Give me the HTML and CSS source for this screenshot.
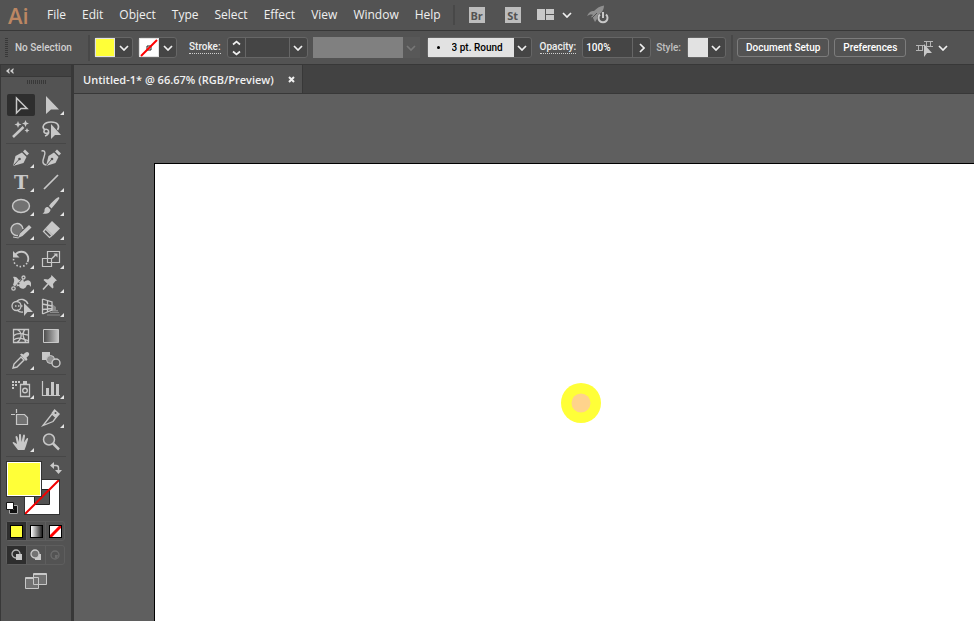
FILE: index.html
```html
<!DOCTYPE html>
<html lang="en">
<head>
  <meta charset="UTF-8" />
  <meta name="viewport" content="width=device-width, initial-scale=1.0"/>
  <title>Untitled-1* @ 66.67% (RGB/Preview)</title>
  <link rel="stylesheet" href="styles.css">
</head>
<body>

  <!-- shared symbols -->
  <svg class="defs" aria-hidden="true">
    <symbol id="chevron" viewBox="0 0 10 6"><path d="M1 1l4 4 4-4" fill="none" stroke="currentColor" stroke-width="1.700"/></symbol>
    <symbol id="more" viewBox="0 0 28 22"><path d="M27 17v4h-4z" fill="#e4e4e4"/></symbol>
    <linearGradient id="fade"><stop offset="0" stop-color="#4a4a4a"/><stop offset="1" stop-color="#c8c8c8"/></linearGradient>
  </svg>

  <header class="menubar">
    <span class="logo">Ai</span>
    <nav class="menu">
      <a href="#">File</a>
      <a href="#">Edit</a>
      <a href="#">Object</a>
      <a href="#">Type</a>
      <a href="#">Select</a>
      <a href="#">Effect</a>
      <a href="#">View</a>
      <a href="#">Window</a>
      <a href="#">Help</a>
    </nav>
    <div class="apps">
      <button class="app" aria-label="Bridge">Br</button>
      <button class="app" aria-label="Stock">St</button>
      <button class="arrange" aria-label="Arrange documents">
        <svg width="18" height="12" viewBox="0 0 18 12" fill="#c8c8c8"><path d="M0 0h8v11H0zM9 0h8v5H9zM9 6h8v5H9z"/></svg>
        <svg class="chev" width="10" height="6"><use href="#chevron"/></svg>
      </button>
      <button class="gpu" aria-label="GPU performance">
        <svg width="22" height="20" viewBox="0 0 22 20">
          <path d="M0 11C2 7 4 6 7 6c3-3 6-5 10-5.500 0 3-1 5-3 7.500-3 1-4 3-4 6l-2 3-2-4-2-1 2-2c-2-1-4 0-6 1z" fill="#8f8f8f"/>
          <path d="M5 13l5-5" stroke="#535353"/>
          <path d="M13 9.500a4.500 4.500 0 1 0 6 0M16 7v6" fill="none" stroke="#c8c8c8" stroke-width="2"/>
        </svg>
      </button>
    </div>
  </header>

  <section class="controlbar">
    <span class="grip-v"></span>
    <span class="status">No Selection</span>
    <span class="divider"></span>

    <button class="picker" aria-label="Fill">
      <span class="chip yellow"></span>
      <span class="drop"><svg width="10" height="6"><use href="#chevron"/></svg></span>
    </button>
    <button class="picker" aria-label="Stroke colour">
      <span class="chip none">
        <svg width="20" height="20" viewBox="0 0 20 20"><path d="M8 8h4v4H8z" fill="none" stroke="#222"/><path d="M2 18L18 2" stroke="#f00" stroke-width="2"/></svg>
      </span>
      <span class="drop"><svg width="10" height="6"><use href="#chevron"/></svg></span>
    </button>

    <div class="field stroke-field">
      <label class="dotted" for="weight">Stroke:</label>
      <div class="box">
        <button class="step" aria-label="Step stroke weight">
          <svg width="9" height="16" viewBox="0 0 9 16" fill="none" stroke="#f0f0f0" stroke-width="1.700"><path d="M1 4.500L4.500 1.500 8 4.500M1 11.500l3.500 3 3.500-3"/></svg>
        </button>
        <input type="text" id="weight">
        <button class="drop" aria-label="Stroke weights"><svg width="10" height="6"><use href="#chevron"/></svg></button>
      </div>
    </div>

    <div class="profile">
      <select aria-label="Width profile" disabled></select>
      <span class="drop"><svg width="10" height="6"><use href="#chevron"/></svg></span>
    </div>

    <div class="box brush">
      <span class="dot"></span>
      <select aria-label="Brush definition"><option>3 pt. Round</option></select>
      <span class="drop"><svg width="10" height="6"><use href="#chevron"/></svg></span>
    </div>

    <div class="field">
      <label class="dotted" for="opacity">Opacity:</label>
      <div class="box">
        <input type="text" id="opacity" value="100%">
        <button class="drop" aria-label="Opacity slider"><svg width="6" height="10" viewBox="0 0 6 10"><path d="M1 1l4 4-4 4" fill="none" stroke="currentColor" stroke-width="1.700"/></svg></button>
      </div>
    </div>

    <div class="field">
      <label class="muted" for="style">Style:</label>
      <button class="picker" id="style">
        <span class="chip light"></span>
        <span class="drop"><svg width="10" height="6"><use href="#chevron"/></svg></span>
      </button>
    </div>
    <span class="divider"></span>

    <div class="actions">
      <button class="action">Document Setup</button>
      <button class="action">Preferences</button>
    </div>
    <button class="similar" aria-label="Select similar objects">
      <svg width="18" height="18" viewBox="0 0 18 18">
        <path d="M2.500 6.500h4v5h-4zM10.500 2.500h4v5h-4zM0 6.500h9M0 11.500h7M8 2.500h9M8 7.500h9" fill="none" stroke="#b4b4b4"/>
        <path d="M8 5v13l3-4h5z" fill="#c8c8c8"/>
      </svg>
      <svg class="chev" width="10" height="6"><use href="#chevron"/></svg>
    </button>
  </section>

  <main class="workspace">
    <aside class="tools">
      <button class="collapse" aria-label="Collapse panel">
        <svg width="8" height="6" viewBox="0 0 8 6" fill="#d0d0d0"><path d="M3.500 0v2L2.500 3l1 1v2L0 3zM7.500 0v2l-1 1 1 1v2L4 3z"/></svg>
      </button>
      <div class="grip"><span></span></div>

      <div class="group">
        <button class="tool active" aria-label="Selection">
          <svg viewBox="0 0 28 22"><path d="M9.500 4v15l4.500-4.500h6z" fill="none" stroke="#c8c8c8" stroke-width="1.500"/></svg>
        </button>
        <button class="tool" aria-label="Direct selection">
          <svg viewBox="0 0 28 22"><path d="M9 2v18l5-4.500h8z" fill="#c8c8c8"/><use href="#more"/></svg>
        </button>
        <button class="tool" aria-label="Magic wand">
          <svg viewBox="0 0 28 22"><path d="M6 19L16.500 9" stroke="#c8c8c8" stroke-width="2.500"/><path d="M11 3l1 2.500L14.500 6.500 12 7.500 11 10 10 7.500 7.500 6.500 10 5.500zM18.500 2l1 2.500L22 5.500 19.500 6.500 18.500 9l-1-2.500L15 5.500l2.500-1zM20 10l.8 1.700 1.700.8-1.700.8-.8 1.700-.8-1.700-1.700-.8 1.700-.8z" fill="#c8c8c8"/></svg>
        </button>
        <button class="tool" aria-label="Lasso">
          <svg viewBox="0 0 28 22"><path d="M8 12C4 9 7 4 14 4s9 4 6.500 8M8 18c3-1 4-3 3.500-5s-4-2.500-4.500 0 3 3 5 1.500" fill="none" stroke="#c8c8c8" stroke-width="1.600"/><path d="M14 6v15l4-4h6z" fill="#c8c8c8"/></svg>
        </button>
      </div>

      <div class="group">
        <button class="tool" aria-label="Pen">
          <svg viewBox="0 0 28 22"><path d="M6 19L8.500 9 15 5.500 19.500 10 16.500 16z" fill="#c8c8c8"/><path d="M16 4.500L18 2.500l4 4-2 2z" fill="#c8c8c8"/><path d="M6.500 18.500l5.500-6" stroke="#535353"/><circle cx="12.500" cy="12" r="1.300" fill="#535353"/><use href="#more"/></svg>
        </button>
        <button class="tool" aria-label="Curvature">
          <svg viewBox="0 0 28 22"><path d="M9 19L11.500 9 17 5.500 21.500 10 18.500 16z" fill="#c8c8c8"/><path d="M18 4.500L20 2.500l4 4-2 2z" fill="#c8c8c8"/><path d="M9.500 18.500l5-6" stroke="#535353"/><circle cx="15" cy="12" r="1.300" fill="#535353"/><path d="M4.500 4c4-1 4 2 2.500 6s-2 7 2 8" fill="none" stroke="#c8c8c8" stroke-width="1.400"/></svg>
        </button>
        <button class="tool" aria-label="Type">
          <svg viewBox="0 0 28 22"><text class="glyph" x="14" y="18">T</text><use href="#more"/></svg>
        </button>
        <button class="tool" aria-label="Line segment">
          <svg viewBox="0 0 28 22"><path d="M7 18L21 4" stroke="#c8c8c8" stroke-width="1.700"/><use href="#more"/></svg>
        </button>
        <button class="tool" aria-label="Ellipse">
          <svg viewBox="0 0 28 22"><ellipse cx="14" cy="11" rx="8.500" ry="6.500" fill="#727272" stroke="#c8c8c8" stroke-width="1.400"/><use href="#more"/></svg>
        </button>
        <button class="tool" aria-label="Paintbrush">
          <svg viewBox="0 0 28 22"><path d="M22.500 3l-1-1C18 4 14 8 12 11l2.500 2.500C17.500 10 21 6 22.500 3zM11 12c-3 0-3.500 2-3.500 4 0 1-1 2-2 2.500 4 1 8-.5 8-4z" fill="#c8c8c8"/><use href="#more"/></svg>
        </button>
        <button class="tool" aria-label="Shaper">
          <svg viewBox="0 0 28 22"><path d="M11 16.500A6 6 0 1 1 16 10" fill="#727272" stroke="#c8c8c8" stroke-width="1.400"/><path d="M11 19l2-4.500L22 6l2.500 2.500-9 8.500z" fill="#c8c8c8"/><path d="M6 18l5.500 1" stroke="#c8c8c8"/><use href="#more"/></svg>
        </button>
        <button class="tool" aria-label="Eraser">
          <svg viewBox="0 0 28 22"><path d="M15 2l8 7.500-7 7L8.500 9z" fill="#c8c8c8"/><path d="M8.500 10L6.500 12.500l6 6 2.500-2z" fill="none" stroke="#c8c8c8" stroke-width="1.300"/><use href="#more"/></svg>
        </button>
      </div>

      <div class="group">
        <button class="tool" aria-label="Rotate">
          <svg viewBox="0 0 28 22"><path d="M8 7.500c3-5 10-5 12.500 0 1 2 1 4.500 0 6.500" fill="none" stroke="#c8c8c8" stroke-width="1.800"/><path d="M20 15a7.200 7.200 0 0 1-13.300-5" fill="none" stroke="#c8c8c8" stroke-width="1.600" stroke-dasharray="1.500 2"/><path d="M6 3v6.500h6.500z" fill="#c8c8c8"/><use href="#more"/></svg>
        </button>
        <button class="tool" aria-label="Scale">
          <svg viewBox="0 0 28 22"><path d="M10.500 3.500h12v11h-12zM5.500 10.500h9v8h-9z" fill="none" stroke="#c8c8c8" stroke-width="1.200"/><path d="M15 10.500l4-4" stroke="#c8c8c8" stroke-width="1.500"/><path d="M16.500 5.500h4v4z" fill="#c8c8c8"/><use href="#more"/></svg>
        </button>
        <button class="tool" aria-label="Width">
          <svg viewBox="0 0 28 22"><path d="M6 5c2-1 4 0 6 3l4-1 1 3c2-2 6-3 7 1v4c-2-3-4-3-5 0-2 3-6 2-7-1-2 0-4 1-6-1 1-3 2-5 0-8z" fill="#c8c8c8"/><path d="M7 16l9-10" stroke="#535353"/><circle cx="6.500" cy="16.500" r="1.700" fill="#535353" stroke="#c8c8c8" stroke-width="1.300"/><circle cx="11.500" cy="11.500" r="1.500" fill="#535353" stroke="#c8c8c8"/><circle cx="16.500" cy="5.500" r="1.500" fill="#535353" stroke="#c8c8c8" stroke-width="1.300"/><use href="#more"/></svg>
        </button>
        <button class="tool" aria-label="Puppet warp">
          <svg viewBox="0 0 28 22"><path d="M14.500 3l5.500 5.500-1.500.5-2.500 3 .5 3.500-1 1L6.500 8l1-1 3.500.5 3-2.500z" fill="#c8c8c8"/><path d="M11 12l-5 5.500" stroke="#c8c8c8" stroke-width="1.600"/><use href="#more"/></svg>
        </button>
        <button class="tool" aria-label="Shape builder">
          <svg viewBox="0 0 28 22"><circle cx="9.500" cy="10" r="4.500" fill="none" stroke="#c8c8c8" stroke-width="1.300"/><path d="M10 5c3-3 9-2 11 3M10 14c2 2 4 2.500 6 2" fill="none" stroke="#c8c8c8" stroke-width="1.300"/><path d="M8 10h9" stroke="#c8c8c8" stroke-width="1.500" stroke-dasharray="1.500 1.500"/><path d="M17 7v13l3.500-4H26z" fill="#c8c8c8"/><use href="#more"/></svg>
        </button>
        <button class="tool" aria-label="Perspective grid">
          <svg viewBox="0 0 28 22"><path d="M15 8l4 3v3h-4zM15 14h6v1.500h-6z" fill="#8a8a8a"/><path d="M5.500 3v15M5.500 3l9.500 3v8l-9.500 4M10.500 4.500v11M5.500 8l9.500 2M5.500 13.500l9.500-1" fill="none" stroke="#c8c8c8" stroke-width="1.300"/><path d="M13 16.500h9M10 19h13" stroke="#8a8a8a"/><use href="#more"/></svg>
        </button>
      </div>

      <div class="group">
        <button class="tool" aria-label="Mesh">
          <svg viewBox="0 0 28 22"><path d="M6.500 4.500h15v13h-15zM6.500 11c4-5 11-1 15-1M10 4.500c6 3 5 9 0 13M18 4.500c-4 4-1 9 1 13M6.500 15c5-4 10-1 15 1" fill="none" stroke="#c8c8c8" stroke-width="1.300"/></svg>
        </button>
        <button class="tool" aria-label="Gradient">
          <svg viewBox="0 0 28 22"><path d="M6.500 4.500h15v13h-15z" fill="url(#fade)" stroke="#c8c8c8"/></svg>
        </button>
        <button class="tool" aria-label="Eyedropper">
          <svg viewBox="0 0 28 22"><path d="M14 8l3 3-7 7-4 1 1-4z" fill="none" stroke="#c8c8c8" stroke-width="1.400"/><path d="M13 5.500l1.500-1 2 1C18 3.500 20 2 21.500 3.500S22 7 19.500 8.500l1 2-1.500 1.500z" fill="#c8c8c8"/><use href="#more"/></svg>
        </button>
        <button class="tool" aria-label="Blend">
          <svg viewBox="0 0 28 22"><path d="M5 3h8v8H5z" fill="#c8c8c8"/><circle cx="13.500" cy="10.500" r="4" fill="#8f8f8f" stroke="#c8c8c8"/><circle cx="19" cy="14" r="4" fill="#535353" stroke="#c8c8c8" stroke-width="1.400"/></svg>
        </button>
      </div>

      <div class="group">
        <button class="tool" aria-label="Symbol sprayer">
          <svg viewBox="0 0 28 22"><path d="M5 3h2v2H5zM8 3h2v2H8zM11 3h2v2h-2zM5 6h2v2H5zM8 6h2v2H8zM5 9h2v2H5zM16 3h4v3h-4z" fill="#c8c8c8"/><path d="M13.500 6.500h9v12h-9z" fill="none" stroke="#c8c8c8" stroke-width="1.300"/><circle cx="18" cy="12.500" r="2.300" fill="none" stroke="#c8c8c8" stroke-width="1.400"/><use href="#more"/></svg>
        </button>
        <button class="tool" aria-label="Column graph">
          <svg viewBox="0 0 28 22"><path d="M5.500 3v14.500H23" fill="none" stroke="#c8c8c8" stroke-width="1.200"/><path d="M9 10h3v7H9zM14 4h3v13h-3zM19 6h3v11h-3z" fill="#c8c8c8"/><use href="#more"/></svg>
        </button>
      </div>

      <div class="group">
        <button class="tool" aria-label="Artboard">
          <svg viewBox="0 0 28 22"><path d="M9.500 7.500h8l3 3v7h-11z" fill="#727272" stroke="#c8c8c8" stroke-width="1.200"/><path d="M9.500 2v4M4 7.500h4" stroke="#c8c8c8" stroke-width="1.200"/></svg>
        </button>
        <button class="tool" aria-label="Slice">
          <svg viewBox="0 0 28 22"><path d="M6 18.500L15 7l4 3.500-3 4z" fill="none" stroke="#c8c8c8" stroke-width="1.300"/><path d="M14.500 6L17.500 2l5.500 5-3.500 4z" fill="#c8c8c8"/><circle cx="18.500" cy="6" r="1" fill="#535353"/><use href="#more"/></svg>
        </button>
        <button class="tool" aria-label="Hand">
          <svg viewBox="0 0 28 22"><path d="M11 19L6 12.500c-1-1.500.5-2 1.500-1L10 13 8.500 6c0-1.500 1.500-1.500 2 0l1.500 5V4c0-1.500 2-1.500 2 0l.5 7L16 4.500c.5-1.500 2-1 2 .5l-1 6.500 2.500-4c1-1 2-.5 1.500 1L19 15l-1.500 4z" fill="#c8c8c8"/><use href="#more"/></svg>
        </button>
        <button class="tool" aria-label="Zoom">
          <svg viewBox="0 0 28 22"><circle cx="12" cy="8.500" r="5.500" fill="#656565" stroke="#c8c8c8" stroke-width="1.500"/><path d="M16 12.500l6 6" stroke="#c8c8c8" stroke-width="2.500"/></svg>
        </button>
      </div>

      <div class="colors">
        <button class="stroke-color" aria-label="Stroke">
          <svg width="34" height="34" viewBox="0 0 34 34"><path d="M9.500 9.500h15v15h-15z" fill="#535353" stroke="#222"/><path d="M0 34L34 0" stroke="#f00000" stroke-width="2"/></svg>
        </button>
        <button class="fill-color" aria-label="Fill"></button>
        <button class="swap" aria-label="Swap fill and stroke">
          <svg width="12" height="12" viewBox="0 0 12 12"><path d="M3 3.500h3q2.500 0 2.500 2.500v3" fill="none" stroke="#c8c8c8" stroke-width="1.500"/><path d="M4 0v7L0 3.500zM5 8h7l-3.500 4z" fill="#c8c8c8"/></svg>
        </button>
        <button class="reset" aria-label="Default fill and stroke">
          <svg width="12" height="12" viewBox="0 0 12 12"><path d="M5.500 5.500h4v4h-4z" fill="none" stroke="#fff" stroke-width="4"/><path d="M5.500 5.500h4v4h-4z" fill="none" stroke="#111" stroke-width="3"/><path d="M.5.500h7v7h-7z" fill="#fff" stroke="#111"/></svg>
        </button>
      </div>

      <div class="modes">
        <button class="active" aria-label="Color"><span class="mini yellow"></span></button>
        <button aria-label="Gradient"><span class="mini gradient"></span></button>
        <button aria-label="None">
          <span class="mini none"><svg width="11" height="11" viewBox="0 0 11 11"><path d="M0 11L11 0" stroke="#f00" stroke-width="3"/></svg></span>
        </button>
      </div>
      <div class="modes draw">
        <button class="active" aria-label="Draw normal">
          <svg width="12" height="12" viewBox="0 0 12 12"><circle cx="5" cy="5" r="4" fill="none" stroke="#b4b4b4" stroke-width="1.300"/><path d="M5 5h6v6H5z" fill="#c8c8c8"/></svg>
        </button>
        <button aria-label="Draw behind">
          <svg width="12" height="12" viewBox="0 0 12 12"><path d="M5 5h6v6H5z" fill="#c8c8c8"/><circle cx="5" cy="5" r="4" fill="#727272" stroke="#c8c8c8" stroke-width="1.300"/></svg>
        </button>
        <button aria-label="Draw inside" disabled>
          <svg width="12" height="12" viewBox="0 0 12 12"><circle cx="6" cy="6" r="4" fill="none" stroke="#6c6c6c" stroke-width="1.300"/><path d="M6 6h3l-1 3H6z" fill="#6c6c6c"/></svg>
        </button>
      </div>
      <button class="screen" aria-label="Screen mode">
        <svg width="22" height="16" viewBox="0 0 22 16" fill="#727272" stroke="#c8c8c8"><path d="M.5 4.500h13v11H.5zM8.500.5h13v11h-13z"/><path d="M.5 5.500h8M8.500 1.500h13"/></svg>
      </button>
    </aside>

    <section class="document">
      <div class="tabs">
        <div class="tab">
          <span>Untitled-1* @ 66.67% (RGB/Preview)</span>
          <button class="close" aria-label="Close document">
            <svg width="7" height="7" viewBox="0 0 7 7"><path d="M1 1l5 5M6 1L1 6" stroke="#f0f0f0" stroke-width="2"/></svg>
          </button>
        </div>
      </div>
      <div class="canvas">
        <div class="artboard">
          <svg class="cursor" width="42" height="42" viewBox="0 0 42 42"><circle cx="21" cy="21" r="20" fill="#ffff38"/><circle cx="21" cy="21" r="9.500" fill="#ffd38c"/></svg>
        </div>
      </div>
    </section>
  </main>

</body>
</html>
```
FILE: styles.css
```css
:root {
  --panel: #535353;
  --dark: #424242;
  --line: #383838;
  --edge: #666;
  --icon: #c8c8c8;
  --text: #f0f0f0;
  --yellow: #ffff38;
}

* {
  box-sizing: border-box;
  font-family: "Open Sans", "Noto Sans", sans-serif;
}

body {
  margin: 0;
  height: 100vh;
  display: flex;
  flex-direction: column;
  overflow: hidden;
  background: var(--panel);
  color: var(--text);
  font-size: 12px;
}

button {
  display: flex;
  align-items: center;
  justify-content: center;
  padding: 0;
  border: none;
  background: transparent;
  color: inherit;
  font-size: inherit;
}

svg {
  display: block;
  flex: none;
}

.defs {
  position: absolute;
  width: 0;
  height: 0;
}

/* Menu bar */
.menubar {
  flex: none;
  display: flex;
  align-items: center;
  height: 31px;
  padding-left: 8px;
  border-bottom: 1px solid var(--line);
}

.logo {
  width: 31px;
  color: #bc8763;
  font-family: "Liberation Sans Narrow", "Open Sans", sans-serif;
  font-size: 22px;
  font-weight: 600;
  line-height: 28px;
}

.menu {
  display: flex;
}

.menu a {
  padding: 0 8px;
  color: var(--text);
  line-height: 16px;
  text-decoration: none;
}

.apps {
  display: flex;
  align-items: center;
  height: 20px;
  margin-left: 4px;
  padding-left: 14px;
  border-left: 2px solid #484848;
}

.app {
  width: 16px;
  height: 16px;
  margin-right: 20px;
  background: #bdbdbd;
  color: #535353;
  font-size: 11px;
  font-weight: 700;
}

.arrange {
  gap: 7px;
  margin: 0 15px 0 -4px;
}

/* Control bar */
.controlbar {
  flex: none;
  display: flex;
  align-items: center;
  height: 34px;
  padding-left: 5px;
  border-bottom: 1px solid var(--line);
  font-size: 10px;
  font-weight: 500;
}

.controlbar * {
  flex-shrink: 0;
  font-family: Roboto, "Open Sans", sans-serif;
}

.grip-v {
  width: 3px;
  height: 20px;
  margin-right: 7px;
  background: repeating-linear-gradient(#383838 0 1px, transparent 1px 2px);
}

.status {
  width: 73px;
  color: #d0d0d0;
}

.divider {
  width: 2px;
  height: 26px;
  margin-right: 4px;
  background: #484848;
}

.picker,
.box {
  height: 21px;
  border: 1px solid var(--edge);
  border-radius: 3px;
  background: #454545;
}

.picker {
  width: 39px;
  margin-right: 5px;
}

.chip {
  width: 20px;
  height: 19px;
  border: 1px solid #e2e2e2;
}

.yellow {
  background: var(--yellow);
}

.none {
  background: #fff;
}

.chip.none {
  display: flex;
  align-items: center;
  justify-content: center;
}

.light {
  background: #e2e2e2;
}

.drop {
  display: flex;
  flex: 1;
  align-items: center;
  justify-content: center;
}

.box {
  display: flex;
  align-items: stretch;
}

.box .drop,
.profile .drop {
  flex: none;
  width: 17px;
}

.box input {
  width: 45px;
  padding: 0 3px;
  border: solid var(--edge);
  border-width: 0 1px;
  background: transparent;
  color: #fff;
  font-size: 10px;
  font-weight: 500;
}

.box #opacity {
  width: 50px;
  border-left: none;
}

.step {
  width: 17px;
}

.field {
  display: flex;
  align-items: center;
  gap: 6px;
  margin-right: 5px;
}

.field .picker {
  margin-right: 0;
}

.stroke-field {
  margin-left: 7px;
}

.dotted {
  line-height: 12px;
  border-bottom: 1px dotted #d0d0d0;
}

.muted {
  color: #c0c0c0;
}

.profile {
  display: flex;
  margin-right: 7px;
}

.profile select {
  width: 90px;
  height: 21px;
  appearance: none;
  border: none;
  background: #808080;
  opacity: 1;
}

.profile .drop {
  background: #585858;
  color: #777;
}

.brush {
  position: relative;
  margin-right: 8px;
}

.brush .dot {
  position: absolute;
  left: 9px;
  top: 8px;
  width: 3px;
  height: 3px;
  border-radius: 50%;
  background: #000;
}

.brush select {
  width: 86px;
  padding: 0 0 0 24px;
  appearance: none;
  border: none;
  background: #e2e2e2;
  color: #000;
  font-size: 10px;
  font-weight: 500;
}

.actions {
  display: flex;
  gap: 5px;
  margin-right: 10px;
}

.action {
  height: 19px;
  padding: 0 8px;
  border: 1px solid #7c7c7c;
  border-radius: 3px;
  color: #fff;
  font-size: 10px;
  font-weight: 500;
  white-space: nowrap;
}

.similar {
  gap: 4px;
}

/* Workspace */
.workspace {
  flex: 1;
  display: flex;
  min-height: 0;
}

.tools {
  flex: none;
  width: 74px;
  border-left: 1px solid var(--line);
  border-right: 3px solid var(--line);
}

.collapse {
  width: 100%;
  height: 12px;
  padding-left: 5px;
  justify-content: flex-start;
  border-bottom: 1px solid var(--line);
  background: var(--dark);
}

.grip {
  display: flex;
  justify-content: center;
  height: 16px;
  padding-top: 3px;
}

.grip span {
  width: 19px;
  height: 4px;
  background: repeating-linear-gradient(90deg, #383838 0 1px, transparent 1px 2px);
}

.group {
  display: grid;
  grid-template-columns: 28px 28px;
  gap: 2px;
  width: 60px;
  margin-left: 5px;
  padding: 3px 1px;
  border-bottom: 1px solid #474747;
}

.grip + .group {
  padding-top: 1px;
}

.tool {
  height: 22px;
  border-radius: 2px;
}

.tool svg {
  width: 28px;
  height: 22px;
}

.tool.active,
.modes .active {
  background: #2e2e2e;
}

.glyph {
  fill: var(--icon);
  font-family: "DejaVu Serif", serif;
  font-size: 19px;
  font-weight: 700;
  text-anchor: middle;
}

/* Fill and stroke swatches overlap each other */
.colors {
  position: relative;
  height: 64px;
}

.colors button {
  position: absolute;
}

.fill-color,
.stroke-color {
  width: 36px;
  height: 36px;
}

.colors .fill-color {
  left: 5px;
  top: 4px;
  border: 1px solid #333;
  outline: 1px solid #fff;
  outline-offset: -2px;
  background: var(--yellow);
}

.colors .stroke-color {
  left: 23px;
  top: 22px;
  border: 1px solid #333;
  background: #fff;
}

.swap {
  right: 9px;
  top: 5px;
}

.reset {
  left: 5px;
  top: 45px;
}

.modes {
  display: grid;
  grid-template-columns: repeat(3, 1fr);
  width: 59px;
  height: 20px;
  margin: 0 0 4px 5px;
  border: 1px solid #5e5e5e;
  border-radius: 3px;
}

.modes button + button {
  border-left: 1px solid #5e5e5e;
}

.mini {
  width: 13px;
  height: 13px;
  border: 1px solid #000;
}

.gradient {
  background: linear-gradient(90deg, #fff, #222);
}

.screen {
  width: 22px;
  height: 16px;
  margin: 8px 0 0 24px;
}

/* Document */
.document {
  flex: 1;
  display: flex;
  flex-direction: column;
  min-width: 0;
}

.tabs {
  flex: none;
  display: flex;
  height: 29px;
  border-bottom: 1px solid var(--line);
  background: var(--dark);
}

.tab {
  display: flex;
  align-items: center;
  gap: 14px;
  padding: 0 7px 0 9px;
  border-right: 1px solid var(--line);
  background: var(--panel);
  font-size: 11px;
  font-weight: 600;
}

.canvas {
  flex: 1;
  display: flex;
  min-height: 0;
  padding: 69px 0 0 80px;
  background: #5f5f5f;
}

.artboard {
  flex: 1;
  position: relative;
  border: solid #000;
  border-width: 1px 0 0 1px;
  background: #fff;
}

.cursor {
  position: absolute;
  left: 405px;
  top: 218px;
}
```
